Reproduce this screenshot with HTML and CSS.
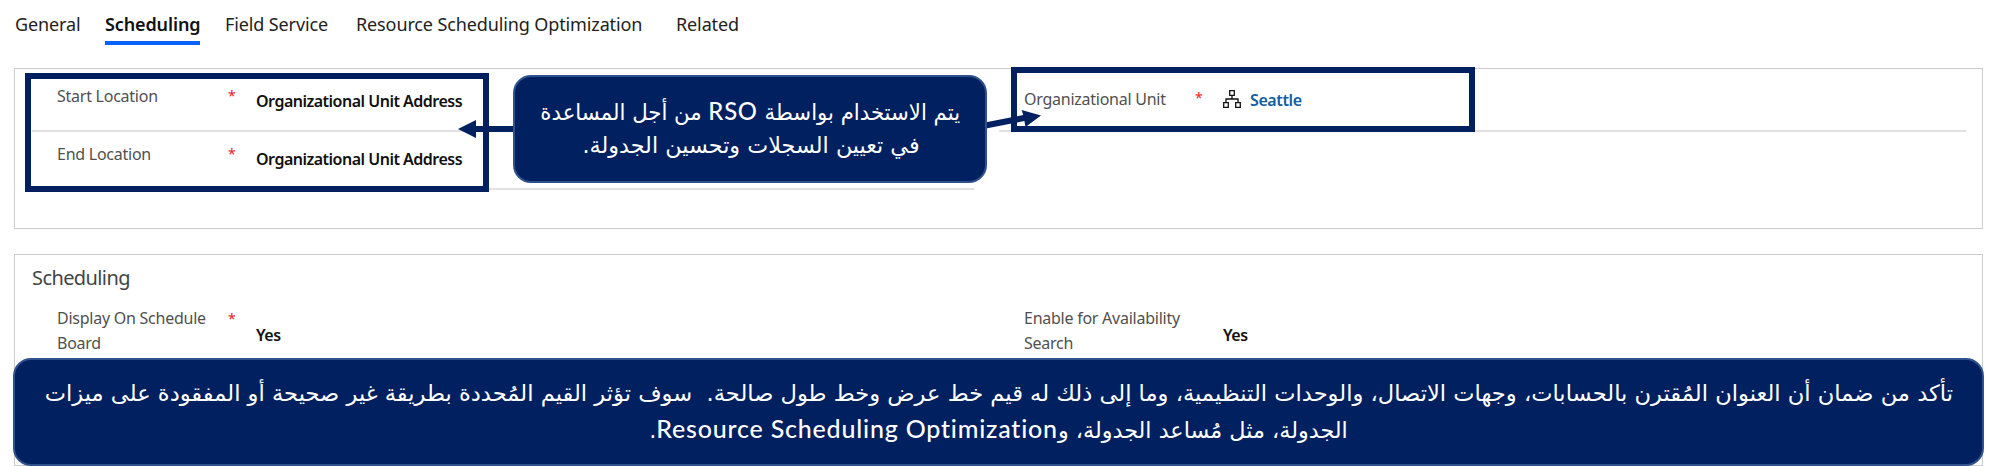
FILE: index.html
```html
<!DOCTYPE html>
<html lang="en">
<head>
<meta charset="utf-8">
<title>Scheduling</title>
<link rel="stylesheet" href="styles.css">
</head>
<body>
<main class="page">
  <nav class="tabs">
    <a class="tab tab-general">General</a>
    <a class="tab tab-scheduling">Scheduling</a>
    <a class="tab tab-service">Field Service</a>
    <a class="tab tab-rso">Resource Scheduling Optimization</a>
    <a class="tab tab-related">Related</a>
  </nav>
  <section class="panel panel-location">
    <div class="column">
      <div class="row">
        <span class="label label-start">Start Location</span><span class="star">*</span>
        <span class="value"><span class="address">Organizational Unit Address</span></span>
      </div>
      <div class="row">
        <span class="label label-end">End Location</span><span class="star">*</span>
        <span class="value"><span class="address">Organizational Unit Address</span></span>
      </div>
    </div>
    <div class="column">
      <div class="row row-unit">
        <span class="label label-unit">Organizational Unit</span><span class="star">*</span>
        <span class="value value-unit">
          <svg class="org" width="18" height="18" viewBox="0 0 18 18" fill="none" stroke="#111" stroke-width="1.3"><path d="M6.7.7h4.6v4.6H6.7zM.7 12.7h4.6v4.6H.7zM12.7 12.7h4.6v4.6h-4.6zM9 5.3V9M3 12.7V9h12v3.7"/></svg>
          <span class="link">Seattle</span>
        </span>
      </div>
    </div>
  </section>
  <section class="panel panel-scheduling">
    <h2 class="heading">Scheduling</h2>
    <div class="fields">
      <div class="row row-board">
        <span class="label label-board">Display On Schedule<br>Board</span><span class="star">*</span>
        <span class="value value-yes">Yes</span>
      </div>
      <div class="row row-board">
        <span class="label label-search">Enable for Availability<br>Search</span><span class="star"></span>
        <span class="value value-yes">Yes</span>
      </div>
    </div>
  </section>
  <div class="outline outline-location"></div>
  <div class="outline outline-unit"></div>
  <svg class="arrows" width="2000" height="466" viewBox="0 0 2000 466" fill="#002060"><path d="M458 129l18-9v6h40v6h-40v6z"/><path d="M1041 115.500l-15.500 11.500-1.100-6-38.400 7.500-1.200-6 38.400-7.500-1.600-5z"/></svg>
  <aside class="callout callout-rso" lang="ar" dir="rtl">
    <div class="line"><span class="fit fit-a">يتم الاستخدام بواسطة <bdi class="latin">RSO</bdi> من أجل المساعدة</span></div>
    <div class="line"><span class="fit fit-b">في تعيين السجلات وتحسين الجدولة.</span></div>
  </aside>
  <aside class="callout callout-address" lang="ar" dir="rtl">
    <div class="line"><span class="fit fit-c">تأكد من ضمان أن العنوان المُقترن بالحسابات، وجهات الاتصال، والوحدات التنظيمية، وما إلى ذلك له قيم خط عرض وخط طول صالحة.&nbsp; سوف تؤثر القيم المُحددة بطريقة غير صحيحة أو المفقودة على ميزات</span></div>
    <div class="line"><span class="fit fit-d">الجدولة، مثل مُساعد الجدولة، و<bdi class="latin">Resource Scheduling Optimization</bdi>.</span></div>
  </aside>
</main>
</body>
</html>
```
FILE: styles.css
```css
* { box-sizing: border-box; }
body { margin: 0; background: #fff; }
.page {
  position: relative;
  width: 2000px;
  height: 466px;
  overflow: hidden;
  font: 16px/24px "Noto Sans", "Open Sans", sans-serif;
  letter-spacing: -0.25px;
  color: #505050;
}
.tabs {
  display: flex;
  height: 68px;
  padding: 11px 0 0 15px;
  font-size: 18px;
  line-height: 26px;
  letter-spacing: -0.12px;
  color: #222;
}
.tab { height: 34px; margin-right: 25px; white-space: nowrap; }
.tab-general { width: 65px; }
.tab-scheduling { width: 95px; font-weight: 600; color: #111; border-bottom: 4px solid #0b62fb; }
.tab-service { width: 106px; }
.tab-rso { width: 295px; }
.panel { width: 1969px; margin-left: 14px; border: 1px solid #ccc; }
.panel-location {
  display: grid;
  grid-template-columns: 942px 967px;
  column-gap: 25px;
  height: 161px;
  padding-left: 17px;
}
.row {
  display: grid;
  grid-template-columns: 171px 28px 1fr;
  height: 58px;
  padding: 10px 0 0 25px;
  border-bottom: 2px solid #e1e1e1;
  white-space: nowrap;
}
.column .row:first-child { height: 63px; padding-top: 15px; }
.star { color: #e8202a; font-size: 14px; }
.value { padding-top: 5px; font-weight: 600; letter-spacing: -0.5px; color: #111; }
.value-unit { display: flex; gap: 9px; padding-top: 4px; letter-spacing: -0.4px; }
.row-unit .label { padding-top: 3px; }
.row-unit .star { padding-top: 2px; }
.org { margin-top: 2px; }
.link { color: #115ea3; }
.panel-scheduling { height: 212px; margin-top: 25px; padding: 9px 0 0 17px; }
.heading { margin: 0; font-size: 20px; line-height: 28px; font-weight: 400; letter-spacing: -0.6px; color: #444; }
.fields { display: grid; grid-template-columns: 942px 967px; column-gap: 25px; padding-top: 14px; }
.row-board { height: 60px; padding-top: 0; line-height: 25px; border: 0; }
.value-yes { padding-top: 17px; }
.outline { position: absolute; width: 464px; border: 6px solid #002060; }
.outline-location { left: 25px; top: 73px; height: 119px; }
.outline-unit { left: 1011px; top: 67px; height: 65px; }
.arrows { position: absolute; left: 0; top: 0; }
.callout {
  position: absolute;
  border: 2px solid #2f528f;
  border-radius: 18px;
  background: #002060;
  color: #fff;
  font: 22.3px/35px "DejaVu Sans", sans-serif;
  letter-spacing: 0;
  text-align: center;
}
.callout-rso { left: 513px; top: 75px; width: 474px; height: 108px; padding-top: 16px; }
.callout-address { left: 13px; top: 358px; width: 1971px; height: 108px; padding-top: 16px; }
.line { display: flex; justify-content: center; height: 35px; white-space: pre; }
.fit { flex: none; }
.fit-a { transform: scaleX(0.953); }
.fit-b { transform: translateX(1px); }
.fit-c { transform: scaleX(1.013); }
.latin { font-family: Lato, sans-serif; font-size: 25px; font-weight: 500; letter-spacing: 0.8px; font-variant-ligatures: none; }
```
